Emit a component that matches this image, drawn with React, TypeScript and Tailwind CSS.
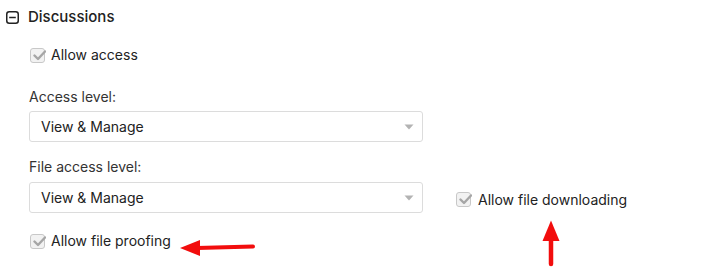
import React from "react";

function Check({ className = "" }: { className?: string }) {
  return (
    <span className={"relative flex h-[15px] w-[15px] shrink-0 items-center justify-center rounded-[3px] border border-[#c8c8c8] bg-[#f2f2f2] " + className}>
      <svg width="13" height="11" viewBox="0 0 13 11" className="absolute left-[2px] top-[1px]">
        <path d="M1.5 5.5 L5 9 L12 1.5" fill="none" stroke="#a6a6a6" strokeWidth="2.4" strokeLinecap="round" strokeLinejoin="round" />
      </svg>
    </span>
  );
}

function Select({ value }: { value: string }) {
  return (
    <div className="flex h-[31px] w-[394px] items-center justify-between rounded-[3px] border border-[#dcdcdc] bg-white pl-[11px] pr-[8px] text-[14px] text-[#222]">
      <span>{value}</span>
      <svg width="10" height="6" viewBox="0 0 10 6">
        <path d="M0.5 0.5 L9.5 0.5 L5 5.5 Z" fill="#b3b3b3" />
      </svg>
    </div>
  );
}

export default function App() {
  return (
    <div className="relative h-[274px] w-[704px] bg-white text-[#222]" style={{ fontFamily: "Inter, 'Noto Sans', sans-serif" }}>
      <div className="mt-[8px] flex h-[18px] items-center pl-[6px]">
        <svg width="13" height="13" viewBox="0 0 13 13">
          <rect x="0.75" y="0.75" width="11.5" height="11.5" rx="2.5" fill="none" stroke="#222" strokeWidth="1.5" />
          <line x1="3.2" y1="6.5" x2="9.8" y2="6.5" stroke="#222" strokeWidth="1.5" />
        </svg>
        <span className="ml-[9px] text-[15px] font-medium leading-[18px]">Discussions</span>
      </div>

      <div className="pl-[29px]">
        <div className="mt-[21px] flex h-[16px] items-center">
          <Check className="ml-[1px]" />
          <span className="ml-[6px] text-[14px] leading-[16px]">Allow access</span>
        </div>

        <div className="mt-[24px] h-[20px] text-[14px] leading-[20px] text-[#333]">Access level:</div>
        <div className="mt-[4px]">
          <Select value="View & Manage" />
        </div>

        <div className="mt-[15px] h-[20px] text-[14px] leading-[20px] text-[#333]">File access level:</div>
        <div className="mt-[5px] flex items-center">
          <Select value="View & Manage" />
          <div className="ml-[33px] mt-[3px] flex items-center">
            <Check />
            <span className="ml-[7px] text-[14px]">Allow file downloading</span>
          </div>
        </div>

        <div className="mt-[20px] flex h-[16px] items-center">
          <Check className="ml-[1px]" />
          <span className="ml-[6px] text-[14px] leading-[16px]">Allow file proofing</span>
        </div>
      </div>

      <svg className="absolute left-[179px] top-[231px]" width="78" height="18" viewBox="0 0 78 18">
        <path d="M1 9 L21 1 L21 17 Z" fill="#f20d0d" />
        <line x1="18" y1="9" x2="74" y2="7.5" stroke="#f20d0d" strokeWidth="4" strokeLinecap="round" />
      </svg>
      <svg className="absolute left-[541px] top-[211px]" width="20" height="48" viewBox="0 0 20 48">
        <path d="M10 1.5 L18.5 22 L1.5 22 Z" fill="#f20d0d" />
        <line x1="10" y1="18" x2="10" y2="45" stroke="#f20d0d" strokeWidth="4.5" strokeLinecap="round" />
      </svg>
    </div>
  );
}
